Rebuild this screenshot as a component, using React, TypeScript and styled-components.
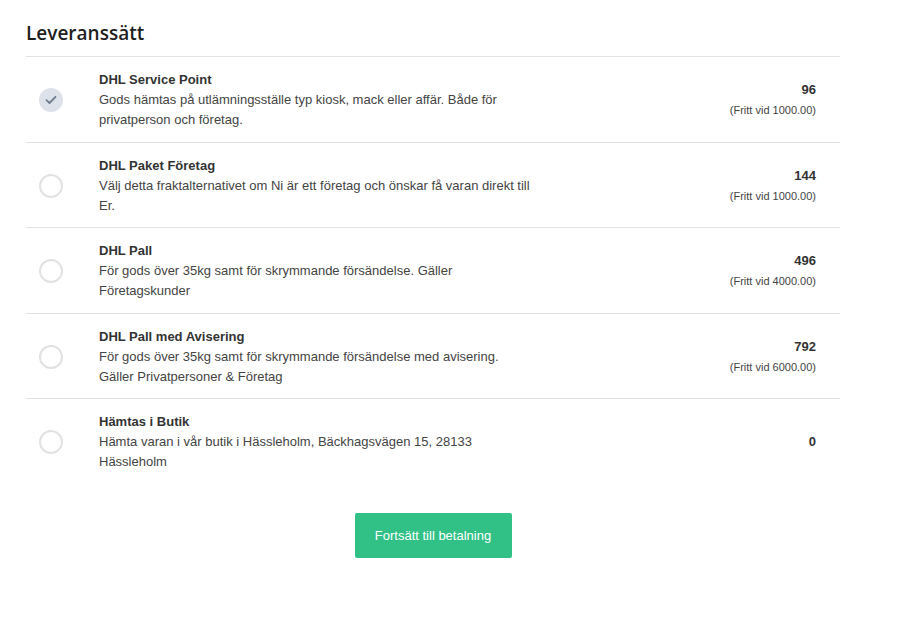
import React, { useState } from 'react';
import styled, { createGlobalStyle } from 'styled-components';

const GlobalStyle = createGlobalStyle`
  body {
    margin: 0;
    background: #fff;
    font-family: "Liberation Sans", Arial, sans-serif;
    color: #333;
  }
`;

type Method = {
  id: string;
  title: string;
  description: string;
  price: number;
  freeFrom?: string;
};

const methods: Method[] = [
  {
    id: 'servicepoint',
    title: 'DHL Service Point',
    description: 'Gods hämtas på utlämningsställe typ kiosk, mack eller affär. Både för privatperson och företag.',
    price: 96,
    freeFrom: '1000.00',
  },
  {
    id: 'paket',
    title: 'DHL Paket Företag',
    description: 'Välj detta fraktalternativet om Ni är ett företag och önskar få varan direkt till Er.',
    price: 144,
    freeFrom: '1000.00',
  },
  {
    id: 'pall',
    title: 'DHL Pall',
    description: 'För gods över 35kg samt för skrymmande försändelse. Gäller Företagskunder',
    price: 496,
    freeFrom: '4000.00',
  },
  {
    id: 'pallavi',
    title: 'DHL Pall med Avisering',
    description: 'För gods över 35kg samt för skrymmande försändelse med avisering. Gäller Privatpersoner & Företag',
    price: 792,
    freeFrom: '6000.00',
  },
  {
    id: 'butik',
    title: 'Hämtas i Butik',
    description: 'Hämta varan i vår butik i Hässleholm, Bäckhagsvägen 15, 28133 Hässleholm',
    price: 0,
  },
];

const Wrapper = styled.div`
  width: 814px;
  padding: 20px 0 0 26px;
`;

const Heading = styled.h2`
  margin: 0;
  padding-bottom: 10px;
  font-family: "Open Sans", "Noto Sans", sans-serif;
  font-size: 19px;
  font-weight: 600;
  color: #1e1e1e;
  line-height: 26px;
  border-bottom: 1px solid #e3e3e3;
`;

const List = styled.ul`
  list-style: none;
  margin: 0;
  padding: 0;
`;

const Row = styled.li<{ $last: boolean }>`
  display: flex;
  align-items: center;
  padding: 13px 24px 11.5px 0;
  min-height: 60px;
  border-bottom: ${({ $last }) => ($last ? 'none' : '1px solid #e3e3e3')};
  cursor: pointer;
`;

const RadioCell = styled.div`
  width: 73px;
  flex: none;
  display: flex;
  padding-left: 13px;
  box-sizing: border-box;
`;

const Radio = styled.span<{ $checked: boolean }>`
  width: 24px;
  height: 24px;
  box-sizing: border-box;
  border-radius: 50%;
  display: flex;
  align-items: center;
  justify-content: center;
  background: ${({ $checked }) => ($checked ? '#dde1e9' : '#fff')};
  border: ${({ $checked }) => ($checked ? 'none' : '2px solid #e2e2e2')};
`;

const Info = styled.div`
  flex: 1;
  min-width: 0;
`;

const Title = styled.div`
  font-size: 13px;
  font-weight: 700;
  line-height: 20px;
  color: #333;
`;

const Description = styled.div`
  font-size: 13px;
  line-height: 20px;
  color: #444;
  max-width: 434px;
`;

const PriceCell = styled.div`
  text-align: right;
  flex: none;
`;

const Price = styled.div`
  font-size: 13px;
  font-weight: 700;
  line-height: 20px;
  color: #333;
`;

const FreeFrom = styled.div`
  font-size: 11px;
  line-height: 20px;
  color: #444;
`;

const Actions = styled.div`
  display: flex;
  justify-content: center;
  padding-top: 29px;
`;

const Button = styled.button`
  width: 157px;
  height: 45px;
  border: none;
  border-radius: 2px;
  background: #31c086;
  color: #fff;
  font-family: "Liberation Sans", Arial, sans-serif;
  font-size: 13px;
  font-weight: 400;
  cursor: pointer;
`;

const Check = () => (
  <svg width="12" height="10" viewBox="0 0 12 10" fill="none">
    <path d="M1.5 5.2 L4.5 8 L10.5 1.8" stroke="#6d7c8e" strokeWidth="1.8" strokeLinecap="round" strokeLinejoin="round" />
  </svg>
);

export default function App() {
  const [selected, setSelected] = useState('servicepoint');

  return (
    <>
      <GlobalStyle />
      <Wrapper>
        <Heading>Leveranssätt</Heading>
        <List>
          {methods.map((m, i) => (
            <Row key={m.id} $last={i === methods.length - 1} onClick={() => setSelected(m.id)}>
              <RadioCell>
                <Radio $checked={selected === m.id}>{selected === m.id && <Check />}</Radio>
              </RadioCell>
              <Info>
                <Title>{m.title}</Title>
                <Description>{m.description}</Description>
              </Info>
              <PriceCell>
                <Price>{m.price}</Price>
                {m.freeFrom && <FreeFrom>(Fritt vid {m.freeFrom})</FreeFrom>}
              </PriceCell>
            </Row>
          ))}
        </List>
        <Actions>
          <Button>Fortsätt till betalning</Button>
        </Actions>
      </Wrapper>
    </>
  );
}
